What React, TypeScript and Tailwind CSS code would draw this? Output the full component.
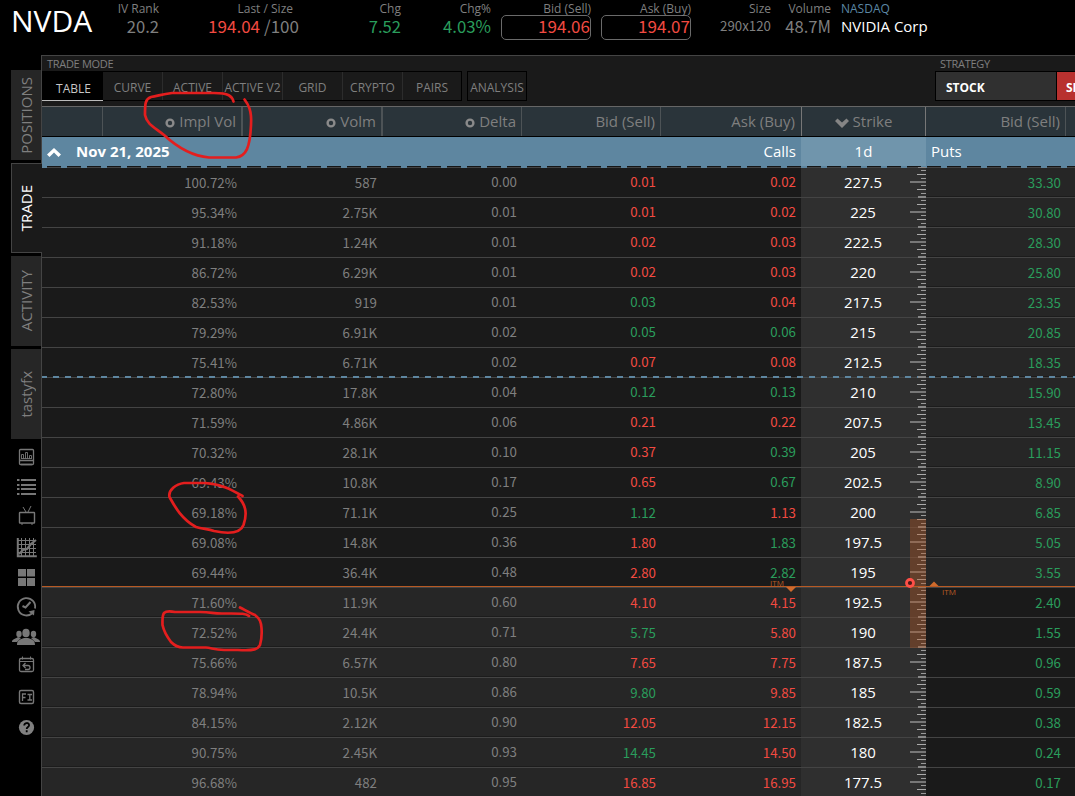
import React from 'react';

type Tone = 'r' | 'g';

interface OptionRow {
  iv: string;
  volume: string;
  delta: string;
  bid: string;
  bidTone: Tone;
  ask: string;
  askTone: Tone;
  strike: string;
  putBid: string;
}

const row = (
  iv: string,
  volume: string,
  delta: string,
  bid: string,
  bidTone: Tone,
  ask: string,
  askTone: Tone,
  strike: string,
  putBid: string
): OptionRow => ({ iv, volume, delta, bid, bidTone, ask, askTone, strike, putBid });

const rows: OptionRow[] = [
  row('100.72%', '587', '0.00', '0.01', 'r', '0.02', 'r', '227.5', '33.30'),
  row('95.34%', '2.75K', '0.01', '0.01', 'r', '0.02', 'r', '225', '30.80'),
  row('91.18%', '1.24K', '0.01', '0.02', 'r', '0.03', 'r', '222.5', '28.30'),
  row('86.72%', '6.29K', '0.01', '0.02', 'r', '0.03', 'r', '220', '25.80'),
  row('82.53%', '919', '0.01', '0.03', 'g', '0.04', 'r', '217.5', '23.35'),
  row('79.29%', '6.91K', '0.02', '0.05', 'g', '0.06', 'g', '215', '20.85'),
  row('75.41%', '6.71K', '0.02', '0.07', 'r', '0.08', 'r', '212.5', '18.35'),
  row('72.80%', '17.8K', '0.04', '0.12', 'g', '0.13', 'g', '210', '15.90'),
  row('71.59%', '4.86K', '0.06', '0.21', 'r', '0.22', 'r', '207.5', '13.45'),
  row('70.32%', '28.1K', '0.10', '0.37', 'r', '0.39', 'g', '205', '11.15'),
  row('69.43%', '10.8K', '0.17', '0.65', 'r', '0.67', 'g', '202.5', '8.90'),
  row('69.18%', '71.1K', '0.25', '1.12', 'g', '1.13', 'r', '200', '6.85'),
  row('69.08%', '14.8K', '0.36', '1.80', 'r', '1.83', 'g', '197.5', '5.05'),
  row('69.44%', '36.4K', '0.48', '2.80', 'r', '2.82', 'g', '195', '3.55'),
  row('71.60%', '11.9K', '0.60', '4.10', 'r', '4.15', 'r', '192.5', '2.40'),
  row('72.52%', '24.4K', '0.71', '5.75', 'g', '5.80', 'r', '190', '1.55'),
  row('75.66%', '6.57K', '0.80', '7.65', 'r', '7.75', 'r', '187.5', '0.96'),
  row('78.94%', '10.5K', '0.86', '9.80', 'g', '9.85', 'r', '185', '0.59'),
  row('84.15%', '2.12K', '0.90', '12.05', 'r', '12.15', 'r', '182.5', '0.38'),
  row('90.75%', '2.45K', '0.93', '14.45', 'g', '14.50', 'r', '180', '0.24'),
  row('96.68%', '482', '0.95', '16.85', 'r', '16.95', 'r', '177.5', '0.17'),
];

// first row where the calls are in the money
const ITM_INDEX = 14;

const modes = ['TABLE', 'CURVE', 'ACTIVE', 'ACTIVE V2', 'GRID', 'CRYPTO', 'PAIRS'];

const tone = { r: 'text-[#f24a41]', g: 'text-[#2a9d5c]' };

const numFont = "font-['Noto_Sans_CJK_SC','Noto_Sans',sans-serif]";

const Quote: React.FC<{ label: string; className: string; valueClass?: string; children: React.ReactNode }> = ({
  label,
  className,
  valueClass = 'text-[16.6px]',
  children,
}) => (
  <div className={`shrink-0 text-right whitespace-nowrap ${className}`}>
    <div className="h-[15px] text-xs leading-[17px] text-[#7f7f7f]">{label}</div>
    <div className={`h-[25px] leading-[22px] ${numFont} ${valueClass}`}>{children}</div>
  </div>
);

const TopBar = () => (
  <header className="flex h-[55px] overflow-hidden text-[#7f7f7f]">
    <div className="w-[109px] shrink-0 pl-[11px] text-[30px] leading-[42px] text-white">NVDA</div>
    <Quote label="IV Rank" className="w-[50px]">20.2</Quote>
    <div className="w-[140px] shrink-0 text-right whitespace-nowrap">
      <div className="h-[15px] pr-[6px] text-xs leading-[17px]">Last / Size</div>
      <div className={`flex h-[25px] justify-end gap-[4px] text-[17px] leading-[22px] ${numFont}`}>
        <span className="text-[#f24a41]">194.04</span>
        <span>/100</span>
      </div>
    </div>
    <Quote label="Chg" className="w-[102px]" valueClass="text-[16.6px] text-[#2a9d5c]">7.52</Quote>
    <Quote label="Chg%" className="w-[90px]" valueClass="text-[16.8px] text-[#2a9d5c]">4.03%</Quote>
    <Quote
      label="Bid (Sell)"
      className="ml-[10px] w-[90px]"
      valueClass="rounded-[5px] border border-[#6a6a6a] text-[17px] leading-[20px]! text-[#f24a41]"
    >
      194.06
    </Quote>
    <Quote
      label="Ask (Buy)"
      className="ml-[10px] w-[90px]"
      valueClass="rounded-[5px] border border-[#6a6a6a] text-[17px] leading-[20px]! text-[#f24a41]"
    >
      194.07
    </Quote>
    <Quote label="Size" className="w-[80px]" valueClass="text-[13.3px]">290x120</Quote>
    <Quote label="Volume" className="w-[60px]">48.7M</Quote>
    <div className="ml-[10px] whitespace-nowrap">
      <div className="h-[15px] text-xs leading-[17px] text-[#5b87a4]">NASDAQ</div>
      <div className="text-[15px] leading-[23px] text-white">NVIDIA Corp</div>
    </div>
  </header>
);

const SideTab: React.FC<{ label: string; active?: boolean }> = ({ label, active }) => (
  <div
    className={`flex h-[90px] items-center justify-center ${
      active
        ? 'z-10 w-[31px] border border-r-0 border-[#444] bg-[#1a1a1a] pr-[2px] text-white'
        : 'w-[30px] bg-[#262626] pr-px text-[#7f7f7f]'
    }`}
  >
    <span className="rotate-180 text-[15px] leading-[18px] [writing-mode:vertical-rl]">{label}</span>
  </div>
);

const SideIcons = () => (
  <svg width="41" height="310" viewBox="0 439 41 310" fill="none" stroke="#777" className="block">
    {/* report */}
    <rect x="19.5" y="449.5" width="14" height="15" rx="1" strokeWidth="1.3" />
    <path d="M19 460.5h15M21 464.5h11" strokeWidth="1.5" />
    <path d="M21.5 458.500v-4h2v4M25.500 458.500v-6h2v6M29.500 458.500v-3h2v3M21 458.500h11" strokeWidth=".9" />
    {/* list */}
    <path d="M17 480h2.500M21 480h15M17 485h2.500M21 485h15M17 489h2.500M21 489h15M17 494h2.500M21 494h15" strokeWidth="2" />
    {/* tv */}
    <rect x="19.500" y="512.500" width="15" height="10.500" rx=".5" strokeWidth="1.400" />
    <path d="M23 507l3 5M31 506l-3 6M21 524h2M31 524h2" />
    {/* chart grid */}
    <path d="M17.800 538v18.200h19" strokeWidth="2" />
    <path d="M21.500 538v18M25.500 538v18M29.500 538v18M33.500 538v18M18 540.500h18M18 544.500h18M18 548.500h18M18 552.500h18" />
    <path d="M19 554l4-4 4-1 4-5 5-4" strokeWidth="2.200" />
    {/* tiles */}
    <path d="M18 569h8v7.500h-8zM27 569h8v7.500h-8zM18 578h8v8h-8zM27 578h8v8h-8z" fill="#777" stroke="none" />
    {/* clock */}
    <path d="M32 613.500a8.700 8.700 0 1 1 3-5" strokeWidth="1.800" />
    <path d="M22.500 606l3 1.500 5-5.500" strokeWidth="2" />
    <path d="M28.500 611.500l6-1.500-.5 5.500z" fill="#777" stroke="none" />
    {/* people */}
    <g fill="#777" stroke="none">
      <ellipse cx="26" cy="633" rx="3.700" ry="4.300" />
      <path d="M17 645c0-5 3-5.500 7-7h4c4 1.500 7 2 7 7z" />
      <ellipse cx="19" cy="634" rx="2.700" ry="3.300" />
      <ellipse cx="33.500" cy="634" rx="2.700" ry="3.300" />
      <path d="M12 642c0-3 3-3 6-5l3 1-4 4zM40 642c0-3-3-3-6-5l-3 1 4 4z" />
    </g>
    {/* calendar */}
    <rect x="19.500" y="658.500" width="14" height="13" rx="1.500" strokeWidth="1.300" />
    <path d="M19 661.500h15M22.500 656.500v3M30.500 656.500v3" />
    <path d="M23 665.500h5a2 2 0 0 1 0 4h-3M25.500 663l-2.500 2.500 2.500 2.500" strokeWidth="1.300" />
    {/* FI */}
    <rect x="19.500" y="690.500" width="14" height="13" rx="1.500" strokeWidth="1.400" />
    <path d="M22.500 701v-7h3.500M22.500 697.500h3M27.500 694.500h4.500M29.800 694v6M27.500 700h4.500" strokeWidth="1.300" />
    {/* help */}
    <circle cx="26.500" cy="727.500" r="7.600" fill="#808080" stroke="none" />
    <path d="M24.200 725.500c0-3.300 4.900-3.200 4.900-.3 0 1.900-2.400 1.700-2.400 3.800M26.700 730.300v1.900" stroke="#000" strokeWidth="1.800" />
  </svg>
);

const Sidebar = () => (
  <nav className="w-[41px] shrink-0 pt-[15px]">
    <div className="flex flex-col gap-[3px] pl-[11px]">
      <SideTab label="POSITIONS" />
      <SideTab label="TRADE" active />
      <SideTab label="ACTIVITY" />
      <SideTab label="tastyfx" />
    </div>
    <SideIcons />
  </nav>
);

const Toolbar = () => (
  <div className="flex h-[50px] shrink-0 text-[#7f7f7f]">
    <div className="w-[893px] shrink-0">
      <div className="h-[15px] pl-[5px] text-[11px] leading-[16px] tracking-[-0.3px]">TRADE MODE</div>
      <div className="flex h-[30px] gap-[5px] text-xs">
        <div className="flex border border-l-0 border-black">
          {modes.map((mode, i) => (
            <div
              key={mode}
              className={`flex justify-center whitespace-nowrap ${
                i === 0
                  ? 'z-10 mb-[-1px] w-[61px] border-b border-[#bbb] bg-black pl-[2px] leading-[34px] text-[#c8c8c8]'
                  : `leading-[32px] ${i < modes.length - 1 ? 'w-[60px] border-r border-[#2c2c2c]' : 'w-[58px]'}`
              }`}
            >
              {mode}
            </div>
          ))}
        </div>
        <div className="flex w-[60px] justify-center border border-black leading-[32px]">ANALYSIS</div>
      </div>
    </div>
    <div className="w-[160px] shrink-0">
      <div className="h-[15px] pl-[5px] text-[11px] leading-[16px] tracking-[-0.3px]">STRATEGY</div>
      <div className="flex h-[30px] border border-r-0 border-black text-xs font-bold leading-[32px] text-white">
        <div className="w-[121px] shrink-0 border-r border-black bg-[#303030] pl-[10px]">STOCK</div>
        <div className="w-[60px] shrink-0 bg-[#b8312f] pl-[9px]">SELL</div>
      </div>
    </div>
  </div>
);

const Dot = () => (
  <svg width="10" height="10" viewBox="0 0 10 10" className="mr-[4px] inline-block align-[-1px]">
    <circle cx="5" cy="5" r="3.400" fill="none" stroke="#8a8a8a" strokeWidth="2.400" />
  </svg>
);

const ColumnHeader = () => (
  <div className="flex h-[31px] shrink-0 border-t border-b border-t-[#666] border-b-black bg-[#2a343a] text-right text-[15px] leading-[29px] whitespace-nowrap text-[#7f7f7f] *:shrink-0">
    <div className="w-[61px] border-r border-[#4d5356]" />
    <div className="w-[140px] border-r-2 border-[#4d5356] pr-[5px]"><Dot />Impl Vol</div>
    <div className="w-[140px] border-r-2 border-[#4d5356] pr-[5px]"><Dot />Volm</div>
    <div className="w-[139px] border-r border-[#4d5356] pr-[5px]"><Dot />Delta</div>
    <div className="w-[139px] border-r border-[#4d5356] pr-[5px]">Bid (Sell)</div>
    <div className="w-[141px] border-r border-[#777] pr-[6px]">Ask (Buy)</div>
    <div className="flex w-[124px] items-center justify-center border-r border-[#777]">
      <svg width="14" height="10" viewBox="0 0 14 10" className="mt-[2px] mr-[4px]">
        <path d="M0 3l2.500-2.500L7 4.500l4.500-4L14 3 7 10z" fill="#858585" />
      </svg>
      Strike
    </div>
    <div className="w-[140px] border-r border-[#4d5356] pr-[5px]">Bid (Sell)</div>
  </div>
);

const ExpirationRow = () => (
  <div className="relative flex h-[29px] shrink-0 bg-[#5e86a0] text-[15px] leading-[29px] text-white">
    <div className="flex w-[619px] shrink-0 items-center">
      <svg width="14" height="9" viewBox="0 0 14 9" className="mt-[2px] ml-[5px]">
        <path d="M0 6.500L7 0l7 6.500L11.500 9 7 4.500 2.500 9z" fill="#fff" />
      </svg>
      <span className="ml-[15px] font-bold">Nov 21, 2025</span>
    </div>
    <div className="w-[140px] shrink-0 pr-[5px] text-right">Calls</div>
    <div className="w-[125px] shrink-0 bg-[#7095ac] text-center">1d</div>
    <div className="pl-[5px]">Puts</div>
  </div>
);

const OptionLine: React.FC<{ item: OptionRow; index: number }> = ({ item, index }) => {
  const itm = index >= ITM_INDEX;
  const otmBg = 'bg-[#1a1a1a]';
  const itmBg = 'border-b border-[#1c1c1c] bg-[#262626]';
  const priceLeading = index < 11 ? 'leading-[28px]' : 'leading-[30px]';
  return (
    <div className="flex h-[30px] shrink-0 border-t border-[#444] text-[13.3px] leading-[30px] text-[#7f7f7f]">
      <div className={`flex w-[759px] shrink-0 text-right ${numFont} ${itm ? itmBg : otmBg}`}>
        <div className="w-[201px] pr-[6px]">{item.iv}</div>
        <div className="w-[140px] pr-[6px]">{item.volume}</div>
        <div className="w-[139px] pr-[5px] leading-[28px]">{item.delta}</div>
        <div className={`w-[139px] pr-[5px] ${priceLeading} ${tone[item.bidTone]}`}>{item.bid}</div>
        <div className={`w-[140px] pr-[5px] ${priceLeading} ${tone[item.askTone]}`}>{item.ask}</div>
      </div>
      <div className="w-[125px] shrink-0 bg-[#2f2f2f] pr-px text-center text-[15px] leading-[28px] text-white">{item.strike}</div>
      <div className={`w-[149px] shrink-0 pr-[14px] text-right ${numFont} ${itm ? otmBg : itmBg} ${tone.g}`}>{item.putBid}</div>
    </div>
  );
};

// Price ruler on the right edge of the strike column, eight ticks for each row
const Ruler = () => (
  <svg width="26" height="629" viewBox="900 167 26 629" className="pointer-events-none absolute top-0 left-[858px]">
    {Array.from({ length: 168 }, (_, i) => {
      const y = 167 + i * 3.75;
      if (i % 8 === 4) return <rect key={i} x="910" y={Math.round(y) - 1} width="16" height="2" fill="#777" />;
      if (i % 8 === 0) return <rect key={i} x="918" y={Math.round(y) - 1} width="8" height="2" fill="#888" />;
      if (i % 2 === 0) return <rect key={i} x="917" y={Math.floor(y)} width="9" height="1" fill="#aaa" />;
      return <rect key={i} x="921" y={Math.floor(y)} width="5" height="1" fill="#999" />;
    })}
    <rect x="910" y="519" width="16" height="129" fill="#b85a24" fillOpacity=".38" />
  </svg>
);

const Markers = () => (
  <div className="pointer-events-none absolute inset-0">
    {/* expiration edge */}
    <svg width="1033" height="2" className="absolute top-[-1px] left-0">
      <path d="M0 .5H1033" stroke="#151515" />
      <path d="M0 1H1033" stroke="#5e86a0" strokeWidth="2" strokeDasharray="6 14" strokeDashoffset="1" />
    </svg>
    {/* expected move */}
    <svg width="1033" height="2" className="absolute top-[209px] left-0">
      <path d="M0 1H1033" stroke="#5e86a0" strokeWidth="2" strokeDasharray="6 6" strokeDashoffset="1" />
    </svg>
    <Ruler />
    {/* in the money line */}
    <div className="absolute top-[419px] left-0 h-px w-full bg-[#b85a24]" />
    <span className="absolute top-[410px] left-[728px] text-[8px] leading-[12px] text-[#b85a24]">ITM</span>
    <span className="absolute top-[419px] left-[900px] text-[8px] leading-[12px] text-[#b85a24]">ITM</span>
    <svg width="160" height="14" viewBox="780 578 160 14" className="absolute top-[411px] left-[738px]">
      <path d="M786 587h10l-5 5z" fill="#cf6a2c" />
      <path d="M929.500 586h9l-4.500-4.500z" fill="#cf6a2c" />
      <circle cx="910" cy="583" r="3.500" fill="#4a1a16" stroke="#ff4f47" strokeWidth="2.800" />
    </svg>
  </div>
);

const Annotations = () => (
  <svg
    width="1075"
    height="796"
    className="pointer-events-none absolute top-0 left-0 z-20"
    fill="none"
    stroke="#e41e1e"
    strokeWidth="2.700"
    strokeLinecap="round"
    strokeLinejoin="round"
  >
    <path d="M233.500 101.500C232 96 229 93 214 93H172C162 94 158 96 151 97C145 99 145 104 145 115C147 125 156 128 164 135C178 148 192 156 209 157.500H236C246 156 250 148 251 125C252 110 248 104 244.500 99.500" />
    <path d="M242.500 496C232 490 222 484 205 483H184C176 484 168 490 169.500 497C174 505 181 519 196 527C203 529 208 529 214 531C228 534 240 534 243.500 525C248 512 245 504 238 496.500" />
    <path d="M249 616C246 613 240 613.500 222 613.500C212 613.500 212 612 200 612H175C170 611 166 611 164 613C162 616 162.500 620 162.500 625C164 632 168 638 171 642C174 645 177 647.500 183 647.500H206C212 648 214 650 224 650H238C255 651 258 649 260 645C262 638 262 634 261.500 628C261 622 260 619 255 615C250 613 245 610 240 607.500" />
  </svg>
);

const App: React.FC = () => {
  return (
    <div className="relative h-[796px] w-[1075px] overflow-hidden bg-black font-['Open_Sans','Noto_Sans',sans-serif]">
      <TopBar />
      <div className="flex h-[741px]">
        <Sidebar />
        <main className="flex w-[1034px] shrink-0 flex-col overflow-hidden border-t border-l border-[#444] bg-[#1a1a1a]">
          <Toolbar />
          <ColumnHeader />
          <ExpirationRow />
          <div className="relative mt-px">
            {rows.map((item, i) => (
              <OptionLine key={item.strike} item={item} index={i} />
            ))}
            <Markers />
          </div>
        </main>
      </div>
      <Annotations />
    </div>
  );
};

export default App;
